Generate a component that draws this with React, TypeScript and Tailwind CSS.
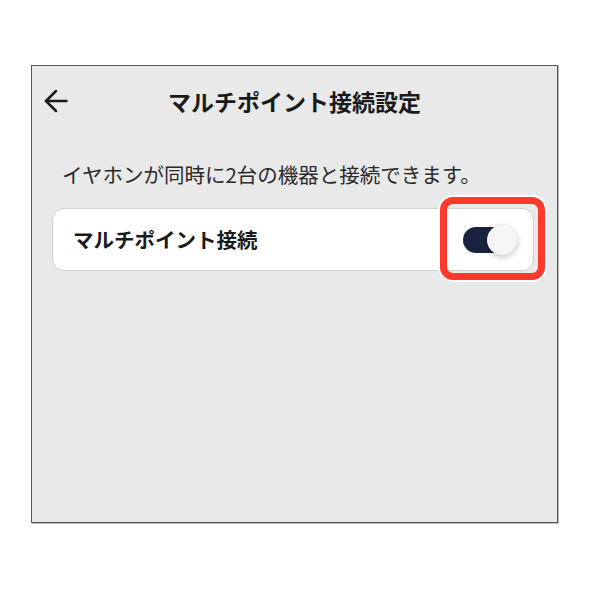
import React from "react";

const jp = { fontFamily: '"Noto Sans CJK JP", "Noto Sans", sans-serif' };

const BackArrow: React.FC = () => (
  <svg width="24" height="24" viewBox="0 0 24 24" fill="none" stroke="#1a1a1a" strokeWidth="2.5" strokeLinecap="round" strokeLinejoin="round">
    <path d="M2 12H22.5" />
    <path d="M12 2L2 12L12 22" />
  </svg>
);

const Toggle: React.FC<{ on?: boolean }> = ({ on = true }) => (
  <div className="flex items-center w-[54px] h-[30px]">
    <div className={`w-[44px] h-[26px] rounded-full ${on ? "bg-[#1c2340]" : "bg-gray-300"}`} />
    <div className="-ml-[20px] w-[30px] h-[30px] rounded-full bg-[#f6f6f6] shadow-[0_2px_6px_rgba(0,0,0,0.25)]" />
  </div>
);

export default function App() {
  return (
    <div className="w-[590px] h-[590px] bg-white pt-[65px] pl-[31px]" style={jp}>
      <div className="w-[527px] h-[458px] bg-[#e8e9e8] border border-[#555] shadow-[1px_1px_0_#bbb] flex flex-col">
        {/* header */}
        <div className="h-[70px] grid grid-cols-[50px_1fr_50px] items-center">
          <div className="pl-[12px] flex items-center">
            <BackArrow />
          </div>
          <h1 className="text-center text-[23px] font-bold text-[#1a1a1a]">マルチポイント接続設定</h1>
          <div />
        </div>

        <p className="mt-[24px] pl-[30px] text-[20.5px] leading-[28px] text-[#2a2a2a]">
          イヤホンが同時に2台の機器と接続できます。
        </p>

        <div className="relative mt-[20px] ml-[20px] w-[482px] h-[63px] bg-white rounded-[12px] border border-[#cfcfcf] flex items-center justify-between pl-[20px] pr-[16px]">
          <span className="text-[20.5px] font-bold text-[#1a1a1a]">マルチポイント接続</span>
          <Toggle />
          {/* highlight overlay */}
          <div className="absolute left-[387px] top-[-12px] w-[105px] h-[83px] rounded-[13px] border-[7px] border-[#fd3a2d] shadow-[0_0_0_2px_#ffffff]" />
        </div>
      </div>
    </div>
  );
}
